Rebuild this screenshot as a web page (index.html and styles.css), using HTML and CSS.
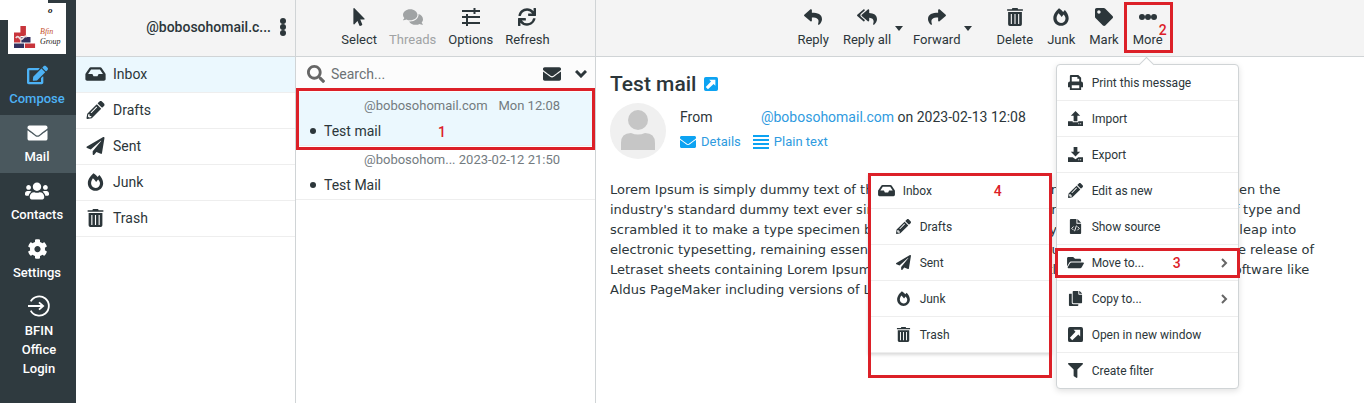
FILE: index.html
```
<!doctype html>
<html lang="en">
<head>
<meta charset="utf-8">
<title>Inbox - Webmail</title>
<link rel="stylesheet" href="styles.css">
</head>

<body>
<!-- icons -->
<svg class="sprite" aria-hidden="true">
	<symbol id="i-inbox" viewBox="0 0 576 512"><path d="M567.938 243.908L462.25 85.374A48.003 48.003 0 0 0 422.311 64H153.689a48 48 0 0 0-39.938 21.374L8.062 243.908A47.994 47.994 0 0 0 0 270.533V400c0 26.51 21.49 48 48 48h480c26.51 0 48-21.49 48-48V270.533a47.994 47.994 0 0 0-8.062-26.625zM162.252 128h251.497l85.333 128H376l-32 64H232l-32-64H76.918l85.334-128z"/></symbol>
	<symbol id="i-pencil" viewBox="0 0 512 512"><path d="M497.9 142.1l-46.1 46.1c-4.7 4.7-12.3 4.7-17 0l-111-111c-4.7-4.7-4.7-12.3 0-17l46.1-46.1c18.7-18.7 49.1-18.7 67.9 0l60.1 60.1c18.8 18.7 18.8 49.1 0 67.9zM284.2 99.8L21.6 362.4.4 483.9c-2.9 16.4 11.4 30.6 27.8 27.8l121.5-21.3 262.6-262.6c4.7-4.7 4.7-12.3 0-17l-111-111c-4.8-4.7-12.4-4.7-17.1 0zM124.1 339.9c-5.5-5.5-5.5-14.3 0-19.8l154-154c5.5-5.5 14.3-5.5 19.8 0s5.5 14.3 0 19.8l-154 154c-5.5 5.5-14.3 5.5-19.8 0zM88 424h48v36.3l-64.5 11.3-31.1-31.1L51.7 376H88v48z"/></symbol>
	<symbol id="i-plane" viewBox="0 0 512 512"><path d="M476 3.2L12.5 270.6c-18.1 10.4-15.8 35.6 2.2 43.2L121 358.4l287.3-253.2c5.5-4.9 13.3 2.6 8.6 8.3L176 407v80.5c0 23.6 28.5 32.9 42.5 15.8L282 426l124.6 52.2c14.2 6 30.4-2.9 33-18.2l72-432C515 7.8 493.3-6.8 476 3.2z"/></symbol>
	<symbol id="i-fire" viewBox="0 0 448 512"><path fill-rule="evenodd" d="M168 8c-58 52-162 158-162 282 0 122 96 218 218 218s218-96 218-218c0-86-52-176-108-232-18 17-34 35-48 54C256 72 216 36 168 8zM150 152c36 28 70 66 92 102l56-70c34 46 54 76 54 112 0 72-56 128-128 128S98 366 98 294c0-46 22-96 52-142z"/></symbol>
	<symbol id="i-trash" viewBox="0 0 448 512"><path fill-rule="evenodd" d="M0 32h136l14-32h148l14 32h136v48H0zM28 112h392v352q0 48-48 48H76q-48 0-48-48zM104 168v288h32V168zM208 168v288h32V168zM312 168v288h32V168z"/></symbol>
	<symbol id="i-envelope" viewBox="0 0 512 512"><path d="M502.3 190.8c3.9-3.1 9.7-.2 9.7 4.7V400c0 26.5-21.5 48-48 48H48c-26.5 0-48-21.5-48-48V195.6c0-5 5.7-7.8 9.7-4.7 22.4 17.4 52.1 39.5 154.1 113.6 21.1 15.4 56.7 47.8 92.2 47.6 35.7.3 72-32.8 92.3-47.6 102-74.1 131.6-96.3 154-113.7zM256 320c23.2.4 56.6-29.2 73.4-41.4 132.7-96.3 142.8-104.7 173.4-128.7 5.8-4.5 9.2-11.5 9.2-18.9v-19c0-26.5-21.5-48-48-48H48c-26.5 0-48 21.5-48 48v19c0 7.4 3.4 14.3 9.2 18.9 30.6 23.9 40.7 32.4 173.4 128.7 16.8 12.2 50.2 41.8 73.4 41.4z"/></symbol>
	<symbol id="i-edit" viewBox="0 0 576 512"><path d="M402.6 83.2l90.2 90.2c3.8 3.8 3.8 10 0 13.8L274.4 405.6l-92.8 10.3c-12.4 1.4-22.9-9.1-21.5-21.5l10.3-92.8L388.8 83.2c3.8-3.8 10-3.8 13.8 0zm162-22.9l-48.8-48.8c-15.2-15.2-39.9-15.2-55.2 0l-35.4 35.4c-3.8 3.8-3.8 10 0 13.8l90.2 90.2c3.8 3.8 10 3.8 13.8 0l35.4-35.4c15.2-15.3 15.2-40 0-55.2zM384 346.2V448H64V128h229.8c3.2 0 6.2-1.3 8.5-3.5l40-40c7.6-7.6 2.2-20.5-8.5-20.5H48C21.5 64 0 85.5 0 112v352c0 26.5 21.5 48 48 48h352c26.5 0 48-21.5 48-48V306.2c0-10.7-12.9-16-20.5-8.5l-40 40c-2.2 2.3-3.5 5.3-3.5 8.5z"/></symbol>
	<symbol id="i-users" viewBox="0 0 640 512"><path d="M96 224c35.3 0 64-28.7 64-64s-28.7-64-64-64-64 28.7-64 64 28.7 64 64 64zm448 0c35.3 0 64-28.7 64-64s-28.7-64-64-64-64 28.7-64 64 28.7 64 64 64zm32 32h-64c-17.6 0-33.5 7.1-45.1 18.6 40.3 22.1 68.9 62 75.1 109.4h66c17.7 0 32-14.3 32-32v-32c0-35.3-28.7-64-64-64zm-256 0c61.9 0 112-50.1 112-112S381.9 32 320 32 208 82.1 208 144s50.1 112 112 112zm76.8 32h-8.3c-20.8 10-43.9 16-68.5 16s-47.6-6-68.5-16h-8.3C179.6 288 128 339.6 128 403.2V432c0 26.5 21.5 48 48 48h288c26.5 0 48-21.5 48-48v-28.8c0-63.6-51.6-115.2-115.2-115.2zm-223.7-13.4C161.5 263.1 145.6 256 128 256H64c-35.3 0-64 28.7-64 64v32c0 17.7 14.3 32 32 32h65.9c6.3-47.4 34.9-87.3 75.2-109.4z"/></symbol>
	<symbol id="i-cog" viewBox="0 0 512 512"><path d="M487.4 315.7l-42.6-24.6c4.3-23.2 4.3-47 0-70.2l42.6-24.6c4.9-2.8 7.1-8.6 5.5-14-11.1-35.6-30-67.8-54.7-94.6-3.8-4.1-10-5.1-14.8-2.3L380.8 110c-17.9-15.4-38.5-27.3-60.8-35.1V25.8c0-5.6-3.9-10.5-9.4-11.7-36.7-8.2-74.3-7.8-109.2 0-5.5 1.2-9.4 6.1-9.4 11.7V75c-22.2 7.9-42.8 19.8-60.8 35.1L88.7 85.5c-4.9-2.8-11-1.9-14.8 2.3-24.7 26.7-43.6 58.9-54.7 94.6-1.7 5.4.6 11.2 5.5 14L67.3 221c-4.3 23.2-4.3 47 0 70.2l-42.6 24.6c-4.9 2.8-7.1 8.6-5.5 14 11.1 35.6 30 67.8 54.7 94.6 3.8 4.1 10 5.1 14.8 2.3l42.6-24.6c17.9 15.4 38.5 27.3 60.8 35.1v49.2c0 5.6 3.9 10.5 9.4 11.7 36.7 8.2 74.3 7.8 109.2 0 5.5-1.2 9.4-6.1 9.4-11.7v-49.2c22.2-7.9 42.8-19.8 60.8-35.1l42.6 24.6c4.9 2.8 11 1.9 14.8-2.3 24.7-26.7 43.6-58.9 54.7-94.6 1.5-5.5-.7-11.3-5.6-14.1zM256 336c-44.1 0-80-35.9-80-80s35.9-80 80-80 80 35.9 80 80-35.9 80-80 80z"/></symbol>
	<symbol id="i-login" viewBox="0 0 24 24"><path d="M3 7a10.500 10.500 0 1 1 0 10M0 12h16M12 8l4.500 4-4.500 4" fill="none" stroke="currentColor" stroke-width="2"/></symbol>
	<symbol id="i-pointer" viewBox="0 0 320 512"><path d="M302.189 329.126H196.105l55.831 135.993c3.889 9.428-.555 19.999-9.444 23.999l-49.165 21.427c-9.165 4-19.443-.571-23.332-9.714l-53.053-129.136-86.664 89.138C18.729 472.71 0 463.554 0 447.977V18.299C0 1.899 19.921-6.096 30.277 5.443l284.412 292.542c11.472 11.179 3.007 31.141-12.5 31.141z"/></symbol>
	<symbol id="i-comments" viewBox="0 0 576 512"><path d="M416 192c0-88.4-93.1-160-208-160S0 103.6 0 192c0 34.3 14.1 65.900 38 92-13.400 30.200-35.500 54.200-35.800 54.500-2.200 2.300-2.800 5.700-1.500 8.700S4.800 352 8 352c36.600 0 66.900-12.300 88.700-25 32.200 15.700 70.300 25 111.300 25 114.900 0 208-71.600 208-160zm122 220c23.900-26 38-57.700 38-92 0-66.900-53.500-124.200-129.300-148.100.9 6.600 1.300 13.300 1.300 20.100 0 105.900-107.700 192-240 192-10.800 0-21.300-.8-31.700-1.900C207.800 439.600 281.800 480 368 480c41 0 79.100-9.200 111.300-25 21.800 12.700 52.100 25 88.700 25 3.200 0 6.100-1.900 7.300-4.800 1.300-2.900.7-6.300-1.500-8.700-.3-.3-22.400-24.200-35.800-54.500z"/></symbol>
	<symbol id="i-sliders" viewBox="0 0 18 18"><path d="M0 3h18M0 9h18M0 15h18M12.500 0v6M5 6v6M5 12v6" fill="none" stroke="currentColor" stroke-width="2"/></symbol>
	<symbol id="i-sync" viewBox="0 0 512 512"><path d="M440.650 12.570l4 82.770A247.160 247.160 0 0 0 255.830 8C134.730 8 33.910 94.920 12.290 209.820A12 12 0 0 0 24.090 224h49.050a12 12 0 0 0 11.670-9.260 175.910 175.910 0 0 1 317-56.940l-101.460-4.860a12 12 0 0 0-12.570 12v47.410a12 12 0 0 0 12 12H500a12 12 0 0 0 12-12V12a12 12 0 0 0-12-12h-47.370a12 12 0 0 0-11.980 12.570zM255.830 432a175.610 175.610 0 0 1-146-77.800l101.800 4.870a12 12 0 0 0 12.570-12v-47.400a12 12 0 0 0-12-12H12a12 12 0 0 0-12 12V500a12 12 0 0 0 12 12h47.350a12 12 0 0 0 12-12.600l-4.150-82.570A247.170 247.170 0 0 0 255.830 504c121.110 0 221.930-86.920 243.550-201.820a12 12 0 0 0-11.800-14.180h-49.050a12 12 0 0 0-11.670 9.260A175.860 175.860 0 0 1 255.830 432z"/></symbol>
	<symbol id="i-search" viewBox="0 0 512 512"><path d="M505 442.700L405.300 343c-4.500-4.500-10.600-7-17-7H372c27.600-35.300 44-79.700 44-128C416 93.100 322.900 0 208 0S0 93.100 0 208s93.100 208 208 208c48.300 0 92.700-16.400 128-44v16.300c0 6.400 2.500 12.500 7 17l99.700 99.700c9.400 9.400 24.600 9.400 33.900 0l28.300-28.300c9.400-9.400 9.400-24.600.1-34zM208 336c-70.700 0-128-57.200-128-128 0-70.700 57.200-128 128-128 70.700 0 128 57.200 128 128 0 70.700-57.200 128-128 128z"/></symbol>
	<symbol id="i-reply" viewBox="0 0 512 512"><path d="M8.309 189.836L184.313 37.851C199.719 24.546 224 35.347 224 56.015v80.053c160.629 1.839 288 34.032 288 186.258 0 61.441-39.581 122.309-83.333 154.132-13.653 9.931-33.111-2.533-28.077-18.631 45.344-145.012-21.507-183.510-176.590-185.742V360c0 20.700-24.300 31.453-39.687 18.164l-176.004-152c-11.071-9.562-11.086-26.753 0-36.328z"/></symbol>
	<symbol id="i-replyall" viewBox="0 0 576 512"><path d="M136.309 189.836L312.313 37.851C327.720 24.546 352 35.348 352 56.015v82.763c129.182 10.231 224 52.212 224 183.548 0 61.441-39.582 122.309-83.333 154.132-13.653 9.931-33.111-2.533-28.077-18.631 38.512-123.162-3.922-169.482-112.590-182.015v84.175c0 20.701-24.300 31.453-39.687 18.164L136.309 226.164c-11.071-9.561-11.086-26.753 0-36.328zm-128 36.328L184.313 378.150C199.700 391.439 224 380.687 224 359.986v-15.818l-108.606-93.785A55.960 55.960 0 0 1 96 207.998a55.953 55.953 0 0 1 19.393-42.380L224 71.832V56.015c0-20.667-24.280-31.469-39.687-18.164L8.309 189.836c-11.086 9.575-11.071 26.767 0 36.328z"/></symbol>
	<symbol id="i-forward" viewBox="0 0 512 512"><path d="M503.691 189.836L327.687 37.851C312.281 24.546 288 35.347 288 56.015v80.053C127.371 137.907 0 170.100 0 322.326c0 61.441 39.581 122.309 83.333 154.132 13.653 9.931 33.111-2.533 28.077-18.631C66.066 312.815 132.917 274.317 288 272.085V360c0 20.700 24.300 31.453 39.687 18.164l176.004-152c11.071-9.562 11.086-26.753 0-36.328z"/></symbol>
	<symbol id="i-tag" viewBox="0 0 512 512"><path d="M0 252.118V48C0 21.490 21.490 0 48 0h204.118a48 48 0 0 1 33.941 14.059l211.882 211.882c18.745 18.745 18.745 49.137 0 67.882L293.823 497.941c-18.745 18.745-49.137 18.745-67.882 0L14.059 286.059A48 48 0 0 1 0 252.118zM112 64c-26.510 0-48 21.490-48 48s21.490 48 48 48 48-21.490 48-48-21.490-48-48-48z"/></symbol>
	<symbol id="i-dots" viewBox="0 0 18 18"><circle cx="3" cy="9" r="3"/><circle cx="9" cy="9" r="3"/><circle cx="15" cy="9" r="3"/></symbol>
	<symbol id="i-vdots" viewBox="0 0 6 18"><circle cx="3" cy="3" r="3"/><circle cx="3" cy="9" r="3"/><circle cx="3" cy="15" r="3"/></symbol>
	<symbol id="i-caret" viewBox="0 0 8 5"><path d="M0 0h8L4 5z"/></symbol>
	<symbol id="i-down" viewBox="0 0 12 8"><path d="M1 1l5 5 5-5" fill="none" stroke="currentColor" stroke-width="3"/></symbol>
	<symbol id="i-right" viewBox="0 0 7 10"><path d="M1 1l4 4-4 4" fill="none" stroke="currentColor" stroke-width="2"/></symbol>
	<symbol id="i-external" viewBox="0 0 16 16"><path fill-rule="evenodd" d="M2 0h12q2 0 2 2v12q0 2-2 2H2q-2 0-2-2V2q0-2 2-2zM6 3l2 2-6 6.500L4.500 14 11 8l2 2V3z"/></symbol>
	<symbol id="i-lines" viewBox="0 0 16 16"><path d="M0 1h16v2H0zM0 5h16v2H0zM0 9h16v2H0zM0 13h16v2H0z"/></symbol>
	<symbol id="i-print" viewBox="0 0 16 16"><path fill-rule="evenodd" d="M3 0h8l3 3v4q2 0 2 2v4h-2v3H2v-3H0V9q0-2 2-2V1q0-1 1-1zM4 2v5h8V4h-2V2zM4 11v3h8v-3z"/></symbol>
	<symbol id="i-import" viewBox="0 0 16 16"><path fill-rule="evenodd" d="M8 0l5 5h-3v6H6V5H3zM0 11h5v1h6v-1h5v5H0zM11 13v1h1v-1zM13 13v1h1v-1z"/></symbol>
	<symbol id="i-export" viewBox="0 0 16 16"><path fill-rule="evenodd" d="M6 0h4v5h3l-5 5-5-5h3zM0 11h5l3 2 3-2h5v5H0zM11 13v1h1v-1zM13 13v1h1v-1z"/></symbol>
	<symbol id="i-source" viewBox="0 0 12 16"><path d="M1 0h6v5h5v10q0 1-1 1H1q-1 0-1-1V1q0-1 1-1zM8 0l4 4H8z"/><path d="M4 8l-2 2 2 2M8 8l2 2-2 2M7 7l-2 6" fill="none" stroke="#fff"/></symbol>
	<symbol id="i-folder" viewBox="0 0 576 512"><path d="M572.694 292.093L500.270 416.248A63.997 63.997 0 0 1 444.989 448H45.025c-18.523 0-30.064-20.093-20.731-36.093l72.424-124.155A64 64 0 0 1 152 256h399.964c18.523 0 30.064 20.093 20.730 36.093zM152 224h328v-48c0-26.510-21.490-48-48-48H272l-64-64H48C21.490 64 0 85.490 0 112v278.046l69.077-118.418C86.214 242.250 117.989 224 152 224z"/></symbol>
	<symbol id="i-copy" viewBox="0 0 448 512"><path d="M320 448v40c0 13.255-10.745 24-24 24H24c-13.255 0-24-10.745-24-24V120c0-13.255 10.745-24 24-24h72v296c0 30.879 25.121 56 56 56h168zm0-344V0H152c-13.255 0-24 10.745-24 24v368c0 13.255 10.745 24 24 24h272c13.255 0 24-10.745 24-24V128H344c-13.200 0-24-10.800-24-24zm120.971-31.029L375.029 7.029A24 24 0 0 0 358.059 0H352v96h96v-6.059a24 24 0 0 0-7.029-16.970z"/></symbol>
	<symbol id="i-filter" viewBox="0 0 512 512"><path d="M487.976 0H24.028C2.710 0-8.047 25.866 7.058 40.971L192 225.941V432c0 7.831 3.821 15.170 10.237 19.662l80 55.980C298.020 518.690 320 507.493 320 487.980V225.941l184.947-184.970C520.021 25.896 509.338 0 487.976 0z"/></symbol>
</svg>

<div class="layout">
	<nav class="taskbar">
		<div class="logo">
			<span class="logo-mask"></span>
			<span class="logo-o">o</span>
			<svg class="logo-mark" viewBox="0 0 24 24"><path fill="#c8353c" d="M7 0h6v11H7zM0 7h7v11H0zM12 19h11v5H12z"/><path fill="#33305f" d="M0 19h11v5H0zM8 12h10v6H8z"/><path d="M2 13q2-3 4 0t4 0 4-1" fill="none" stroke="#ead9dc" stroke-width="2"/></svg>
			<span class="logo-text"><b>Bfin</b>Group</span>
		</div>
		<a class="task compose" href="#"><svg><use href="#i-edit"/></svg>Compose</a>
		<a class="task active" href="#"><svg><use href="#i-envelope"/></svg>Mail</a>
		<a class="task" href="#"><svg class="wide"><use href="#i-users"/></svg>Contacts</a>
		<a class="task" href="#"><svg><use href="#i-cog"/></svg>Settings</a>
		<a class="task office" href="#"><svg><use href="#i-login"/></svg>BFIN Office Login</a>
	</nav>

	<section class="folders">
		<header class="bar account">
			<span>@bobosohomail.c...</span>
			<button type="button" aria-label="Folder actions"><svg><use href="#i-vdots"/></svg></button>
		</header>
		<ul class="folder-list">
			<li class="selected"><a href="#"><svg><use href="#i-inbox"/></svg>Inbox</a></li>
			<li><a href="#"><svg><use href="#i-pencil"/></svg>Drafts</a></li>
			<li><a href="#"><svg><use href="#i-plane"/></svg>Sent</a></li>
			<li><a href="#"><svg><use href="#i-fire"/></svg>Junk</a></li>
			<li><a href="#"><svg><use href="#i-trash"/></svg>Trash</a></li>
		</ul>
	</section>

	<section class="messages">
		<header class="bar tools">
			<button type="button" class="tool"><svg><use href="#i-pointer"/></svg>Select</button>
			<button type="button" class="tool" disabled><svg><use href="#i-comments"/></svg>Threads</button>
			<button type="button" class="tool"><svg><use href="#i-sliders"/></svg>Options</button>
			<button type="button" class="tool"><svg><use href="#i-sync"/></svg>Refresh</button>
		</header>
		<form class="search">
			<svg class="glass"><use href="#i-search"/></svg>
			<input type="text" placeholder="Search..." aria-label="Search">
			<button type="button" aria-label="Unread"><svg class="unread"><use href="#i-envelope"/></svg></button>
			<button type="button" aria-label="Search options"><svg class="down"><use href="#i-down"/></svg></button>
		</form>
		<ul class="message-list">
			<li class="selected">
				<div class="meta"><span class="sender">@bobosohomail.com</span><span class="date">Mon 12:08</span></div>
				<a class="subject" href="#">Test mail</a>
				<span class="mark mark1">1</span>
			</li>
			<li>
				<div class="meta"><span class="sender">@bobosohom...</span><span class="date">2023-02-12 21:50</span></div>
				<a class="subject" href="#">Test Mail</a>
			</li>
		</ul>
	</section>

	<main class="content">
		<header class="bar tools">
			<button type="button" class="tool"><svg><use href="#i-reply"/></svg>Reply</button>
			<button type="button" class="tool"><svg><use href="#i-replyall"/></svg>Reply all</button>
			<button type="button" class="drop" aria-label="Reply all options"><svg><use href="#i-caret"/></svg></button>
			<button type="button" class="tool"><svg><use href="#i-forward"/></svg>Forward</button>
			<button type="button" class="drop last" aria-label="Forward options"><svg><use href="#i-caret"/></svg></button>
			<button type="button" class="tool"><svg><use href="#i-trash"/></svg>Delete</button>
			<button type="button" class="tool"><svg><use href="#i-fire"/></svg>Junk</button>
			<button type="button" class="tool"><svg><use href="#i-tag"/></svg>Mark</button>
			<div class="more">
				<button type="button" class="tool"><svg><use href="#i-dots"/></svg>More</button>
				<span class="mark mark2">2</span>
				<ul class="menu">
					<li><button type="button"><svg><use href="#i-print"/></svg>Print this message</button></li>
					<li><button type="button"><svg><use href="#i-import"/></svg>Import</button></li>
					<li><button type="button"><svg><use href="#i-export"/></svg>Export</button></li>
					<li><button type="button"><svg><use href="#i-pencil"/></svg>Edit as new</button></li>
					<li><button type="button"><svg><use href="#i-source"/></svg>Show source</button></li>
					<li>
						<button type="button"><svg><use href="#i-folder"/></svg>Move to...<svg class="right"><use href="#i-right"/></svg></button>
						<span class="mark mark3">3</span>
						<div class="submenu">
							<ul>
								<li><button type="button"><svg><use href="#i-inbox"/></svg>Inbox</button></li>
								<li class="sub"><button type="button"><svg><use href="#i-pencil"/></svg>Drafts</button></li>
								<li class="sub"><button type="button"><svg><use href="#i-plane"/></svg>Sent</button></li>
								<li class="sub"><button type="button"><svg><use href="#i-fire"/></svg>Junk</button></li>
								<li class="sub"><button type="button"><svg><use href="#i-trash"/></svg>Trash</button></li>
							</ul>
							<span class="mark mark4">4</span>
						</div>
					</li>
					<li><button type="button"><svg><use href="#i-copy"/></svg>Copy to...<svg class="right"><use href="#i-right"/></svg></button></li>
					<li><button type="button"><svg><use href="#i-external"/></svg>Open in new window</button></li>
					<li><button type="button"><svg><use href="#i-filter"/></svg>Create filter</button></li>
				</ul>
			</div>
		</header>
		<article class="mail">
			<h1>Test mail <a href="#" aria-label="Open in new window"><svg><use href="#i-external"/></svg></a></h1>
			<div class="head">
				<svg class="avatar" viewBox="0 0 56 56"><circle cx="28" cy="28" r="28" fill="#f0f0f0"/><circle cx="28" cy="17" r="10" fill="#c6c6c6"/><path fill="#c6c6c6" d="M11 47v-7q0-10 10-10 7 3 14 0 10 0 10 10v7z"/></svg>
				<div>
					<p class="from"><span>From</span> <a href="#">@bobosohomail.com</a> on 2023-02-13 12:08</p>
					<p class="links"><a href="#"><svg><use href="#i-envelope"/></svg>Details</a><a href="#"><svg><use href="#i-lines"/></svg>Plain text</a></p>
				</div>
			</div>
			<p class="text">Lorem Ipsum is simply dummy text of the printing and typesetting industry. Lorem Ipsum has been the<br>
			industry's standard dummy text ever since the 1500s, when an unknown printer took a galley of type and<br>
			scrambled it to make a type specimen book. It has survived not only five centuries, but also the leap into<br>
			electronic typesetting, remaining essentially unchanged. It was popularised in the 1960s with the release of<br>
			Letraset sheets containing Lorem Ipsum passages, and more recently with desktop publishing software like<br>
			Aldus PageMaker including versions of Lorem Ipsum.</p>
		</article>
	</main>
</div>
</body>
</html>
```
FILE: styles.css
```
*{
	box-sizing: border-box;
}
body{
	margin: 0;
	font-family: Roboto, "Liberation Sans", sans-serif;
	font-size: 14px;
	color: #2c363a;
	background: #fff;
}
ul{
	list-style: none;
	margin: 0;
	padding: 0;
}
a{
	color: inherit;
	text-decoration: none;
}
button{
	font: inherit;
	color: inherit;
	background: none;
	border: 0;
	padding: 0;
	cursor: pointer;
}
svg{
	fill: currentColor;
	flex: none;
}
.sprite{
	position: absolute;
	width: 0;
	height: 0;
}
.layout{
	display: grid;
	grid-template-columns: 76px 220px 300px 1fr;
	min-height: 100vh;
}
.bar{
	display: flex;
	height: 57px;
	background: #f4f4f4;
	border-bottom: 1px solid #d0d4d6;
}

/* left task bar */
.taskbar{
	background: #2f3a3f;
	color: #fff;
}
.logo{
	position: relative;
	display: flex;
	align-items: flex-end;
	gap: 4px;
	width: 58px;
	height: 51px;
	margin: 3px 0 3px 8px;
	padding: 0 4px 5px 6px;
	background: #fff;
}
.logo-mask{
	position: absolute;
	left: -8px;
	top: -3px;
	width: 48px;
	height: 20px;
	background: #fff;
}
.logo-o{
	position: absolute;
	left: 40px;
	top: 2px;
	font: italic bold 9px "Liberation Serif", serif;
	color: #111;
}
.logo-mark{
	width: 22px;
	height: 24px;
}
.logo-text{
	font: italic 8px/10px "Liberation Serif", serif;
	color: #222;
	padding-bottom: 2px;
}
.logo-text b{
	display: block;
	font-weight: normal;
	color: #c5522d;
}
.task{
	display: flex;
	flex-direction: column;
	align-items: center;
	gap: 4px;
	height: 58px;
	padding: 8px 2px 0 0;
	font-size: 13px;
	font-weight: 500;
	line-height: 19px;
	text-align: center;
}
.task svg{
	width: 21px;
	height: 20px;
}
.task .wide{
	width: 24px;
}
.compose{
	color: #4db2f5;
}
.active{
	background: #4a585e;
}
.office{
	height: auto;
	padding: 6px 14px 6px 16px;
}
.office svg{
	width: 22px;
	height: 22px;
}

/* folders */
.folders,
.messages{
	border-right: 1px solid #d0d4d6;
}
.account{
	align-items: center;
	justify-content: flex-end;
	gap: 9px;
	padding: 0 9px 2px 0;
	font-weight: 500;
}
.account svg{
	display: block;
	width: 6px;
	height: 18px;
}
.folder-list a{
	display: flex;
	align-items: center;
	gap: 7px;
	height: 36px;
	padding: 0 9px 2px;
	border-bottom: 1px solid #eee;
}
.folder-list svg{
	width: 21px;
	height: 18px;
}
.selected{
	background: #ebf8fe;
}

/* toolbars */
.tools{
	justify-content: center;
}
.tool{
	display: flex;
	flex-direction: column;
	align-items: center;
	gap: 5px;
	height: 56px;
	padding: 8px 6px 0;
	font-size: 13px;
	line-height: 18px;
}
.tool svg{
	width: 20px;
	height: 18px;
}
.tool:disabled{
	color: #a0a3a4;
}
.drop svg{
	display: block;
	width: 8px;
	height: 5px;
}
.drop{
	margin-right: 3px;
}
.drop.last{
	margin-right: 17px;
}
.content .tool{
	padding: 8px 7px 0;
}
.content .tool + .drop{
	margin-left: -3px;
}

/* message list */
.search{
	display: flex;
	align-items: center;
	height: 35px;
	padding: 0 8px 2px 11px;
	background: #fcfcfc;
}
.glass{
	width: 18px;
	height: 18px;
	color: #666;
}
.search input{
	flex: 1;
	min-width: 0;
	border: 0;
	padding: 0 6px;
	font: inherit;
	background: none;
}
.search input::placeholder{
	color: #6c7275;
}
.search button svg{
	display: block;
}
.unread{
	width: 18px;
	height: 18px;
}
.down{
	width: 12px;
	height: 8px;
	margin-left: 14px;
}
.message-list li{
	position: relative;
	height: 54px;
	border-bottom: 1px solid #eee;
}
.meta{
	display: flex;
	justify-content: space-between;
	padding: 4px 35px 0 68px;
	font-size: 13px;
	line-height: 20px;
	color: #737b7f;
}
.subject{
	display: flex;
	align-items: center;
	gap: 8px;
	padding-left: 14px;
	line-height: 30px;
}
.subject::before{
	content: "";
	width: 6px;
	height: 6px;
	border-radius: 50%;
	background: #2c363a;
}

/* numbered red frames */
.mark{
	position: absolute;
	border: 3px solid #dc2028;
	color: #dc2028;
	font-size: 14px;
	font-weight: 500;
	pointer-events: none;
}
.mark1{
	inset: -4px 0 -5px 0;
	padding: 33px 0 0 139px;
}
.mark2{
	inset: 2px -3px 3px -2px;
	padding: 17px 3px 0 0;
	text-align: right;
}
.mark3{
	inset: 3px -2px 2px -2px;
	padding: 4px 0 0 115px;
}
.mark4{
	inset: 0 0 -25px 0;
	padding: 7px 0 0 123px;
}

/* mail view */
.mail{
	padding: 13px 14px;
}
.mail h1{
	display: flex;
	align-items: center;
	gap: 8px;
	margin: 0 0 5px;
	font-size: 21px;
	font-weight: 500;
	line-height: 28px;
}
.mail a{
	color: #2f9be0;
}
.mail h1 svg{
	display: block;
	width: 14px;
	height: 14px;
	color: #0da3f2;
}
.head{
	display: flex;
	gap: 14px;
}
.avatar{
	width: 56px;
	height: 56px;
}
.head p{
	margin: 0;
	line-height: 28px;
}
.from span{
	margin-right: 45px;
}
.links{
	display: flex;
	gap: 12px;
	font-size: 13px;
}
.links a{
	display: flex;
	align-items: center;
	gap: 5px;
	line-height: 22px;
}
.links svg{
	width: 16px;
	height: 16px;
	color: #0da3f2;
}
.text{
	margin: 21px 0 0;
	font: 13px/20px "DejaVu Sans", sans-serif;
	white-space: nowrap;
}

/* popup menus */
.more{
	position: relative;
}
.menu{
	position: absolute;
	z-index: 2;
	top: 64px;
	left: 50%;
	width: 183px;
	margin-left: -92px;
	border: 1px solid #d0d4d6;
	border-radius: 4px;
	background: #fff;
	box-shadow: 0 2px 6px rgba(0,0,0,.12);
}
.menu::before{
	content: "";
	position: absolute;
	top: -6px;
	left: 50%;
	width: 10px;
	height: 10px;
	margin-left: -6px;
	border: 1px solid #d0d4d6;
	border-width: 1px 0 0 1px;
	background: #fff;
	transform: rotate(45deg);
}
.menu li{
	position: relative;
	border-bottom: 1px solid #eee;
}
.menu > li:last-child{
	border-bottom: 0;
}
.menu button{
	display: flex;
	align-items: center;
	gap: 8px;
	width: 100%;
	height: 35px;
	padding: 0 10px;
	font-size: 12px;
}
.menu .tool{
	height: 56px;
}
.menu svg{
	width: 17px;
	height: 15px;
}
.menu .right{
	width: 7px;
	height: 10px;
	margin-left: auto;
	color: #666;
}
.submenu{
	position: absolute;
	top: -72px;
	right: 100%;
	width: 184px;
	margin-right: 5px;
	background: #fff;
	box-shadow: 0 2px 3px rgba(0,0,0,.15);
}
.submenu .sub button{
	padding-left: 27px;
}
```
